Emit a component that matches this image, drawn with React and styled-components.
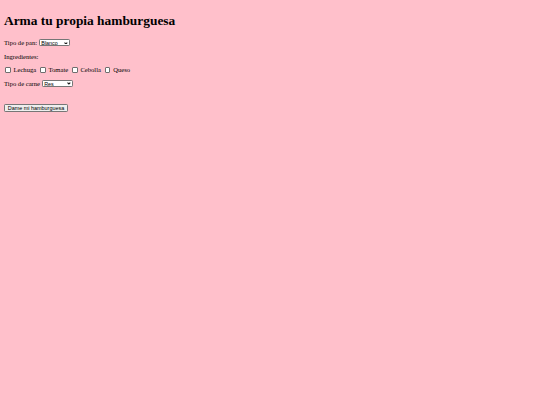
import styled, { createGlobalStyle } from "styled-components";

const GlobalStyle = createGlobalStyle`
  html, body {
    background: #ffc0cb;
  }
  body {
    margin: 0;
    font-family: "Liberation Serif", "Times New Roman", serif;
    font-size: 6.6px;
    color: #000;
  }
`;

const Page = styled.div`
  padding: 12.7px 4px 0;
`;

const Title = styled.h1`
  font-size: 13.4px;
  line-height: 15px;
  font-weight: bold;
  margin: 0 0 8.4px;
`;

const Form = styled.form`
  display: flex;
  flex-direction: column;
  align-items: flex-start;
`;

const Row = styled.div`
  display: flex;
  align-items: center;
  height: 13.5px;
  line-height: 13.5px;
  white-space: nowrap;
`;

const Text = styled.span``;

const CheckLabel = styled.label`
  display: flex;
  align-items: center;
`;

const SelectBox = styled.div`
  position: relative;
  display: flex;
  margin-left: ${(p) => p.$ml}px;
`;

const Select = styled.select`
  appearance: none;
  font-family: "Liberation Sans", Arial, sans-serif;
  font-size: 5.4px;
  line-height: 6px;
  height: 7px;
  width: ${(p) => p.$w}px;
  padding: 0 0 0 1.6px;
  margin: 0;
  border: 0.5px solid #767676;
  border-radius: 1.2px;
  background: #fff;
  color: #000;
  outline: none;
`;

const Chevron = styled.svg`
  position: absolute;
  right: 2.4px;
  top: 2.2px;
  width: 3.8px;
  height: 2.6px;
  pointer-events: none;
`;

const Check = styled.input.attrs({ type: "checkbox" })`
  appearance: none;
  box-sizing: border-box;
  width: 5.6px;
  height: 5.6px;
  margin: 0 2.8px 0 ${(p) => p.$ml}px;
  border: 0.6px solid #6f6f6f;
  border-radius: 1px;
  background: #fff;
`;

const Button = styled.button`
  margin-top: 13.6px;
  box-sizing: border-box;
  font-family: "Liberation Sans", Arial, sans-serif;
  font-size: 5.45px;
  line-height: 6px;
  height: 8.6px;
  width: 64px;
  padding: 0;
  background: #efefef;
  border: 0.5px solid #767676;
  border-radius: 1.2px;
  color: #000;
`;

const ingredientes = [
  { name: "Lechuga", ml: 1.1 },
  { name: "Tomate", ml: 3.9 },
  { name: "Cebolla", ml: 3.9 },
  { name: "Queso", ml: 3.9 },
];

const Dropdown = ({ ml, options, value }) => (
  <SelectBox $ml={ml}>
    <Select $w={31.5} defaultValue={value}>
      {options.map((o) => (
        <option key={o}>{o}</option>
      ))}
    </Select>
    <Chevron viewBox="0 0 6 4">
      <path d="M0.8 0.8 L3 3 L5.2 0.8" fill="none" stroke="#111" strokeWidth="1.6" />
    </Chevron>
  </SelectBox>
);

export default function App() {
  return (
    <>
      <GlobalStyle />
      <Page>
        <Title>Arma tu propia hamburguesa</Title>
        <Form onSubmit={(e) => e.preventDefault()}>
          <Row>
            <Text>Tipo de pan:</Text>
            <Dropdown ml={1.6} value="Blanco" options={["Blanco", "Integral", "Ajonjolí"]} />
          </Row>
          <Row>
            <Text>Ingredientes:</Text>
          </Row>
          <Row>
            {ingredientes.map((item) => (
              <CheckLabel key={item.name}>
                <Check $ml={item.ml} />
                <Text>{item.name}</Text>
              </CheckLabel>
            ))}
          </Row>
          <Row>
            <Text>Tipo de carne</Text>
            <Dropdown ml={1.6} value="Res" options={["Res", "Pollo", "Vegetal"]} />
          </Row>
          <Button type="submit">Dame mi hamburguesa</Button>
        </Form>
      </Page>
    </>
  );
}
